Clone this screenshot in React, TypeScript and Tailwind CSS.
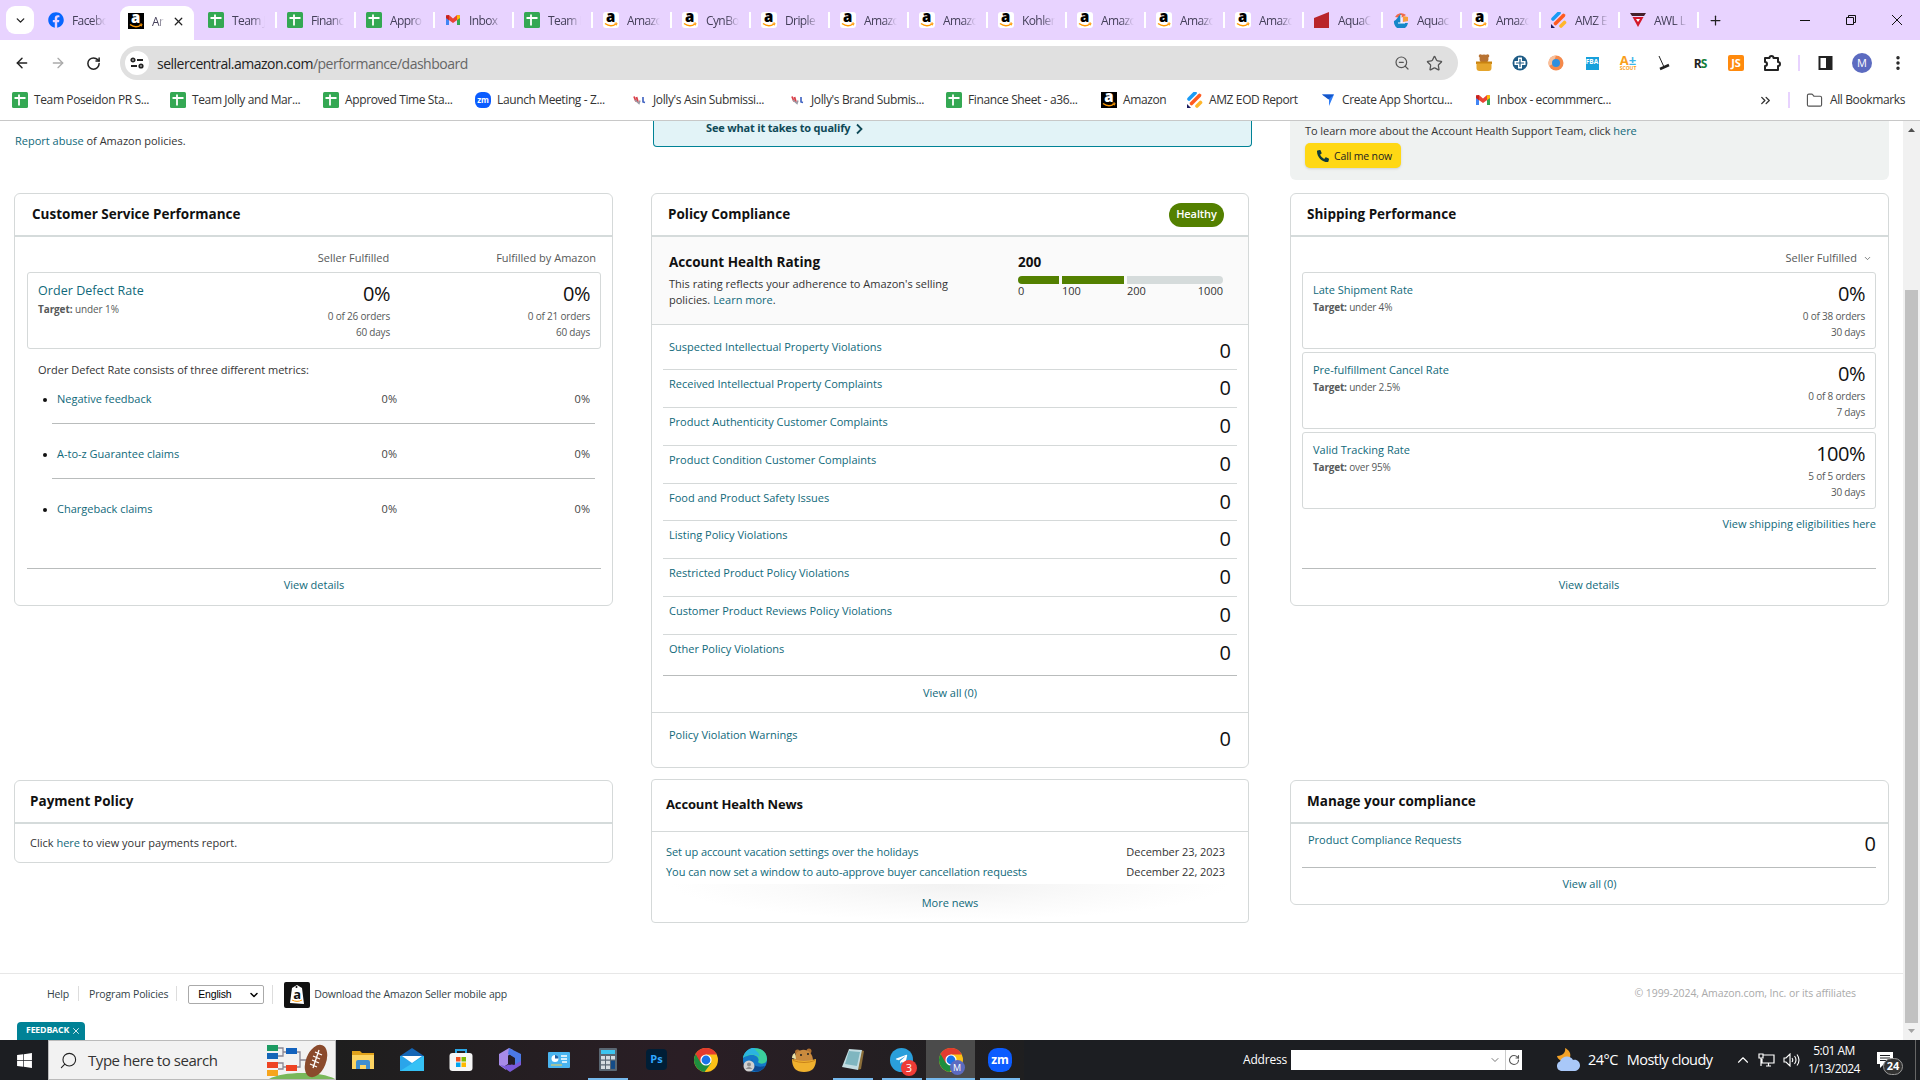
import React from 'react';
import {
  ArrowLeft,
  ArrowRight,
  ChevronDown,
  ChevronRight,
  ChevronUp,
  ChevronsRight,
  Folder,
  MoreVertical,
  Plus,
  RotateCw,
  Search,
  Star,
  X,
  ZoomOut,
} from 'lucide-react';
import { FaFacebook, FaPhoneAlt, FaTelegramPlane, FaWindows } from 'react-icons/fa';

type IconName =
  | 'sheets'
  | 'gmail'
  | 'amazon'
  | 'amazonDark'
  | 'zoom'
  | 'jolly'
  | 'bars'
  | 'plane'
  | 'red'
  | 'swirl'
  | 'triangle';

const SheetsIcon = () => (
  <svg width="16" height="16" viewBox="0 0 16 16">
    <rect width="16" height="16" rx="1.5" fill="#34a853" />
    <path d="M2.5 6h11M7 2.5v11" stroke="#fff" strokeWidth="1.8" />
  </svg>
);

const GmailIcon = () => (
  <svg width="16" height="16" viewBox="0 0 16 16">
    <path d="M1 4v9h3V7z" fill="#4285f4" />
    <path d="M15 4v9h-3V7z" fill="#34a853" />
    <path d="M1 3.5 4 3l4 3.5L12 3l3 .5V6L8 11 1 6z" fill="#ea4335" />
    <path d="M12 3l3 .5V6l-3 2z" fill="#fbbc04" />
    <path d="M1 3.5 4 3v5L1 6z" fill="#c5221f" />
  </svg>
);

const AmazonIcon = ({ dark = false }: { dark?: boolean }) => (
  <svg width="16" height="16" viewBox="0 0 16 16">
    <rect width="16" height="16" rx={dark ? 0 : 3} fill={dark ? '#000' : '#fff'} />
    <text x="7.7" y="10" textAnchor="middle" fontSize="15" fontWeight="800" fontFamily="Open Sans" fill={dark ? '#fff' : '#000'}>
      a
    </text>
    <path d="M2 11.5c3.5 2.6 8 2.6 11 .5" stroke="#ff9900" strokeWidth="1.5" fill="none" />
    <path d="M11.5 11.2l2.500-.2-.6 2.400" stroke="#ff9900" strokeWidth="1" fill="none" />
  </svg>
);

const ZoomIcon = ({ size = 16 }: { size?: number }) => (
  <svg width={size} height={size} viewBox="0 0 24 24">
    <rect width="24" height="24" rx="9.5" fill="#0b5cff" />
    <text x="12" y="16" textAnchor="middle" fontSize="12" fontWeight="700" fontFamily="Open Sans" fill="#fff">
      zm
    </text>
  </svg>
);

const ChromeIcon = () => (
  <svg width="24" height="24" viewBox="0 0 24 24">
    <circle cx="12" cy="12" r="12" fill="#fbc116" />
    <path d="M12 12 1.6 6A12 12 0 0 0 10.5 23.900L17.200 15z" fill="#1e8e3e" />
    <path d="M12 12V6.500h10.700A12 12 0 0 0 1.600 6l5.200 9z" fill="#e33b2e" />
    <circle cx="12" cy="12" r="5.6" fill="#fff" />
    <circle cx="12" cy="12" r="4.4" fill="#1a73e8" />
  </svg>
);

const SiteIcon = ({ name }: { name: IconName }) => {
  switch (name) {
    case 'sheets':
      return <SheetsIcon />;
    case 'gmail':
      return <GmailIcon />;
    case 'amazon':
      return <AmazonIcon />;
    case 'amazonDark':
      return <AmazonIcon dark />;
    case 'zoom':
      return <ZoomIcon />;
    case 'jolly':
      return (
        <svg width="16" height="16" viewBox="0 0 16 16">
          <path d="M3 4.5l2 5M5.500 5l1.500 5" stroke="#d9414a" strokeWidth="1.8" />
          <path d="M4 8l4 3.5 1-3" stroke="#9a9aa5" strokeWidth="1.5" fill="none" />
          <path d="M12 5v5l2 .5" stroke="#3b5fc0" strokeWidth="1.6" fill="none" />
        </svg>
      );
    case 'bars':
      return (
        <svg width="16" height="16" viewBox="0 0 16 16">
          <path d="M2 7l6-6" stroke="#1a9bf5" strokeWidth="3.6" strokeLinecap="round" />
          <path d="M4.500 11.500l8-8" stroke="#ff5a1f" strokeWidth="3.6" strokeLinecap="round" />
          <path d="M10 14l3.500-3.500" stroke="#ffb62a" strokeWidth="3.6" strokeLinecap="round" />
          <path d="M0 12l4 4H0z" fill="#1c1d5e" />
        </svg>
      );
    case 'plane':
      return (
        <svg width="16" height="16" viewBox="0 0 16 16">
          <path d="M2 2.500h12L9 14V7z" fill="#2f7df6" />
          <path d="M2 2.500h12L8.500 7.500z" fill="#1456c9" />
        </svg>
      );
    case 'red':
      return (
        <svg width="16" height="16" viewBox="0 0 16 16">
          <path d="M0 6 15 0v16H0z" fill="#b9252b" />
        </svg>
      );
    case 'swirl':
      return (
        <svg width="16" height="16" viewBox="0 0 16 16">
          <path d="M2 5a7 7 0 0 1 11-2L8 6z" fill="#f06a4b" />
          <path d="M1 9c3-1 4-5 7-7v9h7a7 7 0 0 1-14-2z" fill="#1687c9" />
          <path d="M8 3v8H5M8 11h4" stroke="#fff" strokeWidth="1.2" fill="none" />
          <path d="M10 4l5 1v4l-5 1z" fill="#f7a03c" />
        </svg>
      );
    case 'triangle':
      return (
        <svg width="16" height="16" viewBox="0 0 16 16">
          <path d="M0 1h16l-2 3H2z" fill="#43202a" />
          <path d="M2.500 5h11L8 15z" fill="#d3182a" />
          <path d="M6 7h4L8 10z" fill="#fff" />
        </svg>
      );
  }
};

const tabs: { title: string; icon: IconName }[] = [
  { title: 'Team J', icon: 'sheets' },
  { title: 'Financ', icon: 'sheets' },
  { title: 'Appro', icon: 'sheets' },
  { title: 'Inbox', icon: 'gmail' },
  { title: 'Team I', icon: 'sheets' },
  { title: 'Amazo', icon: 'amazon' },
  { title: 'CynBo', icon: 'amazon' },
  { title: 'Driple', icon: 'amazon' },
  { title: 'Amazo', icon: 'amazon' },
  { title: 'Amazo', icon: 'amazon' },
  { title: 'Kohler', icon: 'amazon' },
  { title: 'Amazo', icon: 'amazon' },
  { title: 'Amazo', icon: 'amazon' },
  { title: 'Amazo', icon: 'amazon' },
  { title: 'AquaC', icon: 'red' },
  { title: 'Aquac', icon: 'swirl' },
  { title: 'Amazo', icon: 'amazon' },
  { title: 'AMZ E', icon: 'bars' },
  { title: 'AWL L', icon: 'triangle' },
];

const bookmarks: { title: string; icon: IconName; width: string }[] = [
  { title: 'Team Poseidon PR S...', icon: 'sheets', width: 'w-[158px]' },
  { title: 'Team Jolly and Mar...', icon: 'sheets', width: 'w-[153px]' },
  { title: 'Approved Time Sta...', icon: 'sheets', width: 'w-[152px]' },
  { title: 'Launch Meeting - Z...', icon: 'zoom', width: 'w-[156px]' },
  { title: "Jolly's Asin Submissi...", icon: 'jolly', width: 'w-[158px]' },
  { title: "Jolly's Brand Submis...", icon: 'jolly', width: 'w-[157px]' },
  { title: 'Finance Sheet - a36...', icon: 'sheets', width: 'w-[155px]' },
  { title: 'Amazon', icon: 'amazonDark', width: 'w-[86px]' },
  { title: 'AMZ EOD Report', icon: 'bars', width: 'w-[133px]' },
  { title: 'Create App Shortcu...', icon: 'plane', width: 'w-[155px]' },
  { title: 'Inbox - ecommmerc...', icon: 'gmail', width: 'w-[160px]' },
];

const TabStrip = () => (
  <div className="flex h-10 items-center bg-[#e8d3ff] text-xs text-[#45405a]">
    <div className="ml-1.5 flex h-7 w-7 items-center justify-center rounded-[9px] bg-white">
      <ChevronDown size={13} strokeWidth={2.5} color="#222" />
    </div>
    <div className="ml-3.5 flex w-[72px] items-center gap-2">
      <FaFacebook size={16} color="#0866ff" className="shrink-0" />
      <span className="w-[34px] overflow-hidden whitespace-nowrap pt-[2px] tracking-[-0.6px] [mask-image:linear-gradient(to_right,#000_60%,transparent)]">Facebo</span>
    </div>
    <div className="flex h-[34px] w-[74px] items-center self-end rounded-t-[9px] bg-white pb-[4px] pl-2">
      <AmazonIcon dark />
      <span className="ml-2 w-3 overflow-hidden pt-[2px] tracking-[-0.6px] [mask-image:linear-gradient(to_right,#000_50%,transparent)]">Am</span>
      <X size={13} strokeWidth={2.4} color="#222" className="ml-[8px]" />
    </div>
    <div className="ml-[14px] flex">
      {tabs.map((tab, i) => (
        <div key={i} className="flex w-[79px] items-center">
          <SiteIcon name={tab.icon} />
          <span className="ml-2 w-[33px] overflow-hidden whitespace-nowrap pt-[2px] tracking-[-0.6px] [mask-image:linear-gradient(to_right,#000_60%,transparent)]">{tab.title}</span>
          <span className="ml-[10px] h-4 w-[2px] bg-white" />
        </div>
      ))}
    </div>
    <Plus size={15} strokeWidth={2} color="#222" className="-ml-[1px]" />
    <div className="ml-auto flex items-center">
      <svg width="112" height="12" viewBox="0 0 112 12" className="mr-[9px]" fill="none" stroke="#111">
        <path d="M1 6.500h10" />
        <path d="M47.500 3.500h7v7h-7zM49.500 3.500v-2h7v7h-2" />
        <path d="M93 1l10 10M103 1l-10 10" />
      </svg>
    </div>
  </div>
);

const Extensions = () => (
  <div className="ml-[8px] flex items-center">
    <div className="flex w-9 justify-center">
      <svg width="18" height="18" viewBox="0 0 18 18">
        <circle cx="9" cy="5" r="4.500" fill="#b87333" />
        <circle cx="5.500" cy="2" r="1.800" fill="#b87333" />
        <circle cx="12.500" cy="2" r="1.800" fill="#b87333" />
        <path d="M1 7.500h16V10H1z" fill="#c98311" />
        <path d="M1.500 9.500h15V14q0 3-3 3h-9q-3 0-3-3z" fill="#e5a52c" />
      </svg>
    </div>
    <div className="flex w-9 justify-center">
      <svg width="16" height="16" viewBox="0 0 16 16">
        <circle cx="8" cy="8" r="7.500" fill="#1f5c86" />
        <path d="M8 2.500v11M2.500 8h11" stroke="#fff" strokeWidth="4" />
        <path d="M8 4v8M4 8h8" stroke="#1f5c86" strokeWidth="1.200" />
      </svg>
    </div>
    <div className="flex w-9 justify-center">
      <svg width="16" height="16" viewBox="0 0 16 16">
        <circle cx="8" cy="8" r="7.500" fill="#f4894b" />
        <path d="M8 .5A7.500 7.500 0 0 0 1 11l4-2z" fill="#f9c09b" />
        <circle cx="8" cy="8" r="4" fill="#2e8fe0" />
      </svg>
    </div>
    <div className="flex w-9 justify-center">
      <div className="flex h-[13px] w-[13px] justify-center bg-[#16a0dc] text-[6.500px] font-bold leading-[10px] text-white">FBA</div>
    </div>
    <div className="flex w-9 flex-col items-center text-[#f9a01b]">
      <span className="text-[13px] font-bold leading-[11px]">
        A<span className="text-[#3db6e8]">±</span>
      </span>
      <span className="text-[5px] font-bold leading-[5px]">SCOUT</span>
    </div>
    <div className="flex w-9 justify-center">
      <svg width="12" height="16" viewBox="0 0 12 16" fill="none" stroke="#222">
        <path d="M1 1l5 11" />
        <path d="M2 14l9-4" strokeWidth="2.500" />
      </svg>
    </div>
    <div className="flex w-9 items-end justify-center text-[12px] font-bold leading-4 tracking-[-1px] text-[#222]">
      R<span className="mt-[2px] text-[#14803c]">S</span>
    </div>
    <div className="flex w-9 justify-center">
      <div className="flex h-4 w-4 items-center justify-center rounded-[2px] bg-[#ff8a0d] text-[11px] font-bold text-white">JS</div>
    </div>
    <div className="flex w-9 justify-center">
      <svg width="18" height="18" viewBox="0 0 18 18" fill="none" stroke="#222" strokeWidth="2">
        <path d="M2 4h4.500a2 2 0 0 1 4 0H15v4a2 2 0 0 1 0 4v4H2v-4a2 2 0 0 0 0-4z" strokeLinejoin="round" />
      </svg>
    </div>
    <span className="ml-2 h-4 w-[2px] bg-[#e8d3ff]" />
    <svg width="16" height="16" viewBox="0 0 16 16" className="ml-[18px]">
      <rect x="1.500" y="2" width="12" height="12" fill="#fff" stroke="#222" strokeWidth="2" />
      <path d="M8 2h6v12H8z" fill="#222" />
    </svg>
    <div className="ml-[18px] flex h-5 w-5 items-center justify-center rounded-full bg-[#5c6bc0] text-[11px] text-white">M</div>
    <MoreVertical size={18} strokeWidth={2.6} color="#222" className="ml-[17px]" />
  </div>
);

const Toolbar = () => (
  <div className="flex h-10 items-center bg-white pt-[6px]">
    <ArrowLeft size={16} strokeWidth={2.2} color="#222" className="ml-[14px]" />
    <ArrowRight size={16} strokeWidth={2} color="#aaa" className="ml-5" />
    <RotateCw size={15} strokeWidth={2.4} color="#222" className="ml-5" />
    <div className="ml-[19px] flex h-[34px] w-[1338px] items-center rounded-full bg-[#e0e0e0] pl-[5px]">
      <div className="flex h-6 w-6 items-center justify-center rounded-full bg-white">
        <svg width="14" height="12" viewBox="0 0 14 12" fill="none" stroke="#222" strokeWidth="1.800">
          <circle cx="3" cy="3" r="1.700" />
          <path d="M7 3h6M1 9h6" />
          <circle cx="11" cy="9" r="1.700" />
        </svg>
      </div>
      <span className="ml-2 text-[14px] tracking-[-0.5px] text-[#222]">
        sellercentral.amazon.com<span className="text-[#666]">/performance/dashboard</span>
      </span>
      <ZoomOut size={16} strokeWidth={1.8} color="#555" className="ml-auto" />
      <Star size={17} strokeWidth={1.8} color="#555" className="ml-4 mr-[15px]" />
    </div>
    <Extensions />
  </div>
);

const BookmarkBar = () => (
  <div className="flex h-[41px] items-center border-b border-[#c8c8c8] bg-white pl-3 text-[12px] tracking-[-0.38px] text-[#333]">
    {bookmarks.map((b, i) => (
      <div key={i} className={`flex shrink-0 items-center gap-1.5 whitespace-nowrap ${b.width}`}>
        <SiteIcon name={b.icon} />
        {b.title}
      </div>
    ))}
    <ChevronsRight size={15} strokeWidth={2.2} color="#333" className="ml-auto" />
    <span className="ml-[15px] h-4 w-[2px] bg-[#e8d3ff]" />
    <Folder size={17} strokeWidth={1.6} color="#555" className="ml-4" />
    <span className="ml-[7px] mr-[15px]">All Bookmarks</span>
  </div>
);

const Link = ({ children, className = '' }: { children: React.ReactNode; className?: string }) => (
  <a className={`text-[#10697a] ${className}`}>{children}</a>
);

const CardTitle = ({ children }: { children: React.ReactNode }) => (
  <h2 className="text-[13.500px] font-bold text-[#111]">{children}</h2>
);

const Rate = ({ value, orders, days }: { value: string; orders: string; days: string }) => (
  <div className="flex flex-col items-end text-[10px] leading-4 tracking-[-0.2px] text-[#565959]">
    <span className="mb-px text-[20px] leading-[26px] tracking-[-0.500px] text-[#111]">{value}</span>
    <span>{orders}</span>
    <span>{days}</span>
  </div>
);

const odrMetrics = ['Negative feedback', 'A-to-z Guarantee claims', 'Chargeback claims'];

const CustomerServiceCard = () => (
  <section className="flex h-[413px] w-[599px] flex-col rounded-[6px] border border-[#d5d9d9]">
    <div className="flex h-[43px] items-center border-b-2 border-[#d5dbdb] pl-[17px]">
      <CardTitle>Customer Service Performance</CardTitle>
    </div>
    <div className="flex h-[35px] items-center justify-end pr-[16px] pt-[7px] text-[#565959]">
      <span className="mr-[107px]">Seller Fulfilled</span>
      <span>Fulfilled by Amazon</span>
    </div>
    <div className="ml-3 mr-[11px] flex h-[77px] rounded-[3px] border border-[#d5d9d9] pl-[10px] pr-[10px] pt-[8px]">
      <div className="flex-1">
        <Link className="block pt-px text-[12.500px] leading-[18px] tracking-[0.050px]">Order Defect Rate</Link>
        <div className="text-[10px] leading-[19px] tracking-[-0.1px] text-[#565959]">
          <b className="font-bold">Target:</b> under 1%
        </div>
      </div>
      <Rate value="0%" orders="0 of 26 orders" days="60 days" />
      <div className="flex w-[200px] justify-end">
        <Rate value="0%" orders="0 of 21 orders" days="60 days" />
      </div>
    </div>
    <p className="mt-[13px] pl-[23px] leading-4 text-[#333]">Order Defect Rate consists of three different metrics:</p>
    <ul className="mt-[9px] pl-[37px] pr-[17px]">
      {odrMetrics.map((metric, i) => (
        <li key={metric} className={i < 2 ? 'mb-[18px] flex h-[37px] items-start border-b border-[#b9bcbc] pt-1' : 'flex h-[37px] items-start pt-1'}>
          <span className="-ml-[9px] mr-[10px] mt-[7px] h-[4px] w-[4px] rounded-full bg-[#111]" />
          <Link className="leading-4">{metric}</Link>
          <span className="ml-auto w-[193px] text-right leading-4 text-[#444]">0%</span>
          <span className="mr-[5px] w-[193px] text-right leading-4 text-[#444]">0%</span>
        </li>
      ))}
    </ul>
    <div className="ml-3 mr-[11px] mt-auto flex h-[37px] items-center justify-center border-t border-[#b9bcbc] pb-[3px]">
      <Link>View details</Link>
    </div>
  </section>
);

const violations = [
  'Suspected Intellectual Property Violations',
  'Received Intellectual Property Complaints',
  'Product Authenticity Customer Complaints',
  'Product Condition Customer Complaints',
  'Food and Product Safety Issues',
  'Listing Policy Violations',
  'Restricted Product Policy Violations',
  'Customer Product Reviews Policy Violations',
  'Other Policy Violations',
];

const CountRow = ({ label, className = '' }: { label: string; className?: string }) => (
  <div className={`flex items-start justify-between pl-[6px] ${className}`}>
    <Link className="leading-4">{label}</Link>
    <span className="text-[20px] leading-6 text-[#111]">0</span>
  </div>
);

const HealthScale = () => (
  <div className="mt-[15px] w-[205px]">
    <CardTitle>200</CardTitle>
    <div className="mt-[4px] flex h-2 gap-[3px]">
      <div className="w-[41px] rounded-l-full bg-[#538000]" />
      <div className="w-[62px] bg-[#538000]" />
      <div className="flex-1 rounded-r-full bg-[#d5dbdb]" />
    </div>
    <div className="flex leading-[14px] text-[#333]">
      <span className="w-11">0</span>
      <span className="w-[65px]">100</span>
      <span>200</span>
      <span className="ml-auto">1000</span>
    </div>
  </div>
);

const PolicyCard = () => (
  <section className="h-[575px] w-[598px] rounded-[6px] border border-[#d5d9d9]">
    <div className="flex h-[43px] items-center justify-between border-b-2 border-[#d5dbdb] pl-4 pr-6">
      <CardTitle>Policy Compliance</CardTitle>
      <span className="flex h-6 w-[55px] items-center justify-center rounded-full bg-[#538000] text-[11px] font-semibold tracking-[-0.1px] text-white">Healthy</span>
    </div>
    <div className="flex h-[88px] justify-between border-b border-[#d5d9d9] bg-[#fafafa] pl-[17px] pr-[25px]">
      <div className="mt-[15px] w-[300px]">
        <CardTitle>Account Health Rating</CardTitle>
        <p className="mt-[4px] leading-4 text-[#333]">
          This rating reflects your adherence to Amazon's selling
          <br />
          policies. <Link>Learn more</Link>.
        </p>
      </div>
      <HealthScale />
    </div>
    <div className="px-[11px] pt-[7.700px]">
      {violations.map((v, i) => (
        <CountRow
          key={v}
          label={v}
          className={i === 8 ? 'h-[41.300px] border-b border-[#b9bcbc] pr-[6px] pt-[6px]' : 'h-[37.750px] border-b border-[#d5d9d9] pr-[6px] pt-[6px]'}
        />
      ))}
    </div>
    <div className="flex h-[37px] items-center justify-center border-b border-[#d5d9d9] pb-[2px]">
      <Link>View all (0)</Link>
    </div>
    <CountRow label="Policy Violation Warnings" className="mx-[11px] pr-[6px] pt-[14px]" />
  </section>
);

const shippingRates = [
  { name: 'Late Shipment Rate', target: 'under 4%', value: '0%', orders: '0 of 38 orders', days: '30 days' },
  { name: 'Pre-fulfillment Cancel Rate', target: 'under 2.5%', value: '0%', orders: '0 of 8 orders', days: '7 days' },
  { name: 'Valid Tracking Rate', target: 'over 95%', value: '100%', orders: '5 of 5 orders', days: '30 days' },
];

const ShippingCard = () => (
  <section className="flex h-[413px] w-[599px] flex-col rounded-[6px] border border-[#d5d9d9]">
    <div className="flex h-[43px] shrink-0 items-center border-b-2 border-[#d5dbdb] pl-4">
      <CardTitle>Shipping Performance</CardTitle>
    </div>
    <div className="flex h-[35px] shrink-0 items-center justify-end gap-1.5 pr-[16px] pt-[7px] text-[#565959]">
      Seller Fulfilled
      <ChevronDown size={9} />
    </div>
    <div className="ml-[11px] mr-3 flex flex-col gap-[3px]">
      {shippingRates.map((rate) => (
        <div key={rate.name} className="flex h-[77px] justify-between rounded-[3px] border border-[#d5d9d9] pl-[10px] pr-[10px] pt-[8px]">
          <div>
            <Link className="block leading-[18px]">{rate.name}</Link>
            <div className="text-[10px] leading-4 tracking-[-0.2px] text-[#565959]">
              <b className="font-bold">Target:</b> {rate.target}
            </div>
          </div>
          <Rate value={rate.value} orders={rate.orders} days={rate.days} />
        </div>
      ))}
    </div>
    <Link className="mr-3 mt-[7px] self-end leading-4">View shipping eligibilities here</Link>
    <div className="ml-[11px] mr-3 mt-auto flex h-[37px] items-center justify-center border-t border-[#b9bcbc] pb-[3px]">
      <Link>View details</Link>
    </div>
  </section>
);

const news = [
  { title: 'Set up account vacation settings over the holidays', date: 'December 23, 2023' },
  { title: 'You can now set a window to auto-approve buyer cancellation requests', date: 'December 22, 2023' },
];

const LowerRow = () => (
  <div className="flex items-start pl-[14px]">
    <section className="mt-[1px] h-[83px] w-[599px] rounded-[6px] border border-[#d5d9d9]">
      <div className="flex h-[43px] items-center border-b-2 border-[#d5dbdb] pl-[15px]">
        <CardTitle>Payment Policy</CardTitle>
      </div>
      <p className="pl-[15px] leading-[38px] text-[#333]">
        Click <Link>here</Link> to view your payments report.
      </p>
    </section>
    <section className="ml-[38px] h-[144px] w-[598px] rounded-[4px] border border-[#d5d9d9]">
      <div className="flex h-[52px] items-center border-b border-[#d5d9d9] pb-px pl-[14px]">
        <h2 className="text-[13px] font-bold tracking-[-0.130px] text-[#111]">Account Health News</h2>
      </div>
      <div className="pl-[14px] pr-[23px] pt-[10px]">
        {news.map((n) => (
          <div key={n.title} className="flex justify-between leading-5 tracking-[-0.060px]">
            <Link>{n.title}</Link>
            <span className="tracking-[-0.050px] text-[#333]">{n.date}</span>
          </div>
        ))}
      </div>
      <div className="mx-4 mt-[2px] flex h-[37px] items-center justify-center bg-[radial-gradient(ellipse_at_top,#f2f2f2_0%,#fafafa_40%,#ffffff_70%)] pt-[2px]">
        <Link>More news</Link>
      </div>
    </section>
    <section className="ml-[41px] mt-[1px] h-[125px] w-[599px] rounded-[6px] border border-[#d5d9d9]">
      <div className="flex h-[43px] items-center border-b-2 border-[#d5dbdb] pl-4">
        <CardTitle>Manage your compliance</CardTitle>
      </div>
      <CountRow label="Product Compliance Requests" className="ml-[11px] mr-3 h-[44px] border-b border-[#b9bcbc] pt-[8px]" />
      <div className="flex h-[33px] items-center justify-center">
        <Link>View all (0)</Link>
      </div>
    </section>
  </div>
);

const Footer = () => (
  <footer className="flex h-[49px] items-start border-t border-[#e7e7e7] text-[10.500px] tracking-[-0.160px] text-[#333f48]">
    <span className="ml-[47px] mt-[11px] leading-[18px]">Help</span>
    <span className="ml-[9px] mt-3 h-[15px] w-px bg-[#ddd]" />
    <span className="ml-[10px] mt-[11px] leading-[18px]">Program Policies</span>
    <span className="ml-2 mt-3 h-[15px] w-px bg-[#ddd]" />
    <div className="ml-[11px] mt-[11px] flex h-[19px] w-[76px] items-center justify-between rounded-[2px] border border-[#aaa] pl-[9px] pr-[3px] font-['Liberation_Sans',sans-serif] text-[10.500px] text-black">
      English
      <ChevronDown size={12} strokeWidth={3} />
    </div>
    <span className="ml-2 mt-[11px] h-[19px] w-px bg-[#ddd]" />
    <svg width="26" height="26" viewBox="0 0 26 26" className="ml-[11px] mt-2">
      <rect width="26" height="26" rx="2" fill="#111" />
      <path d="M8 6l5-3 5 3 2 16-14-1z" fill="#fff" />
      <circle cx="12.500" cy="5" r="1" fill="#111" />
      <text x="13" y="16.500" textAnchor="middle" fontSize="13" fontWeight="700" fontFamily="Open Sans" fill="#111">
        a
      </text>
      <path d="M8 18c3 1.800 7 1.800 10 0" stroke="#ff9900" fill="none" />
    </svg>
    <span className="ml-1 mt-[11px] leading-[18px]">Download the Amazon Seller mobile app</span>
    <span className="ml-auto mr-[47px] mt-[10px] leading-[18px] tracking-[-0.1px] text-[#aaa]">© 1999-2024, Amazon.com, Inc. or its affiliates</span>
  </footer>
);

const Scrollbar = () => (
  <div className="flex w-[17px] flex-col items-center bg-[#f1f1f1]">
    <svg width="17" height="17" viewBox="0 0 17 17">
      <path d="M5 11l3.500-4 3.500 4z" fill="#505050" />
    </svg>
    <div className="mt-[152px] h-[733px] w-[13px] bg-[#c1c1c1]" />
    <svg width="17" height="17" viewBox="0 0 17 17">
      <path d="M5 6l3.500 4L12 6z" fill="#a3a3a3" />
    </svg>
  </div>
);

const Page = () => (
  <div className="flex h-[919px] bg-white">
    <main className="flex w-[1903px] flex-col text-[11px]">
      <div className="flex h-[72px] items-start pl-[15px]">
        <p className="mt-[12px] w-[638px] leading-4 text-[#333]">
          <Link>Report abuse</Link> of Amazon policies.
        </p>
        <div className="flex h-[26px] w-[599px] items-start gap-1 rounded-b-[4px] border border-t-0 border-[#008296] bg-[#e2f3f7] pl-[52px]">
          <span className="text-[11px] font-bold leading-[14px] tracking-[-0.180px] text-[#0f4a58]">See what it takes to qualify</span>
          <svg width="7" height="12" viewBox="0 0 7 12" className="ml-[2px] mt-[2px]" fill="none" stroke="#0f4a58" strokeWidth="1.800">
            <path d="M1 1.500l4.500 4.500L1 10.500" />
          </svg>
        </div>
        <div className="ml-[38px] h-[59px] w-[599px] rounded-b-[6px] bg-[#eff2f1] pl-[15px] pt-[2px]">
          <p className="leading-4 tracking-[-0.060px] text-[#333]">
            To learn more about the Account Health Support Team, click <Link>here</Link>
          </p>
          <button className="mt-1 flex h-[25px] w-[96px] items-center gap-[5px] rounded-[5px] bg-[#ffd814] pl-3 text-[10.500px] tracking-[-0.150px] text-[#222] shadow-sm">
            <FaPhoneAlt size={12} color="#0f3b3b" className="-scale-x-100 rotate-90" />
            <span className="pt-[2px]">Call me now</span>
          </button>
        </div>
      </div>
      <div className="flex h-[586px] items-start pl-[14px]">
        <CustomerServiceCard />
        <div className="w-[38px]" />
        <PolicyCard />
        <div className="w-[41px]" />
        <ShippingCard />
      </div>
      <LowerRow />
      <div className="mt-auto">
        <Footer />
        <div className="ml-[17px] flex h-[18px] w-[68px] items-center gap-[2px] rounded-t-[4px] bg-[#008296] pl-[9px] text-[8.800px] font-bold tracking-[-0.200px] text-white">
          FEEDBACK
          <X size={10} strokeWidth={2} />
        </div>
      </div>
    </main>
    <Scrollbar />
  </div>
);

const TaskIcon = ({ children, open = false, active = false }: { children: React.ReactNode; open?: boolean; active?: boolean }) => (
  <div className={active ? 'flex h-10 w-[49px] flex-col items-center bg-[#4b4b4b]' : 'flex h-10 w-[49px] flex-col items-center'}>
    <div className="relative flex h-[38px] items-center pt-[1px]">{children}</div>
    {(open || active) && <div className={active ? 'h-[2px] w-full bg-[#76b9ed]' : 'h-[2px] w-10 bg-[#76b9ed]'} />}
  </div>
);

const SearchArt = () => (
  <svg width="68" height="37" viewBox="0 0 68 37">
    <path d="M11 6h5v8h-5M11 27h5v-6h-5M16 10h3M16 25h3M30 10h3v15h-3M33 18h6" stroke="#8b8794" strokeWidth="1.300" fill="none" />
    <rect x="0" y="3" width="11" height="6" fill="#1c9b62" />
    <rect x="0" y="11" width="11" height="6" fill="#1566b8" />
    <rect x="0" y="20" width="11" height="6" fill="#ee4323" />
    <rect x="0" y="28" width="11" height="6" fill="#f7a51c" />
    <rect x="19" y="6" width="11" height="6" fill="#1262bd" />
    <rect x="19" y="23" width="11" height="6" fill="#ee4323" />
    <path d="M2 37c14-8 52-8 66 0z" fill="#79b85a" />
    <ellipse cx="49" cy="19" rx="10" ry="17" transform="rotate(22 49 19)" fill="#8a4a2c" />
    <path d="M52 8l-6 18M48 10l7 3M46 14l7 3M45 18l7 3M43 22l7 3" stroke="#fff" strokeWidth="1.300" />
  </svg>
);

const Taskbar = () => (
  <div className="flex h-10 items-center bg-[#1c1e22] text-white">
    <div className="flex w-12 justify-center">
      <FaWindows size={17} />
    </div>
    <div className="flex h-10 w-[288px] items-center border border-[#bbb] bg-[#f2f2f2] pl-[10px]">
      <Search size={19} strokeWidth={1.4} color="#222" className="-scale-x-100" />
      <span className="ml-[10px] text-[15px] tracking-[-0.450px] text-[#333]">Type here to search</span>
      <div className="ml-auto">
        <SearchArt />
      </div>
    </div>
    <div className="ml-[2px] flex bg-linear-to-r from-[#1e1e1e] via-[#2a1e25] to-[#1f1f20]">
      <TaskIcon>
        <svg width="22" height="18" viewBox="0 0 22 18">
          <path d="M0 0h8l2 2h12v16H0z" fill="#e0a21b" />
          <path d="M0 4h22v14H0z" fill="#fcd462" />
          <path d="M4 18v-7q0-2 2-2h10q2 0 2 2v7h-4v-4H8v4z" fill="#3e8ed0" />
        </svg>
      </TaskIcon>
      <TaskIcon>
        <svg width="24" height="23" viewBox="0 0 24 23">
          <path d="M0 8 12 0l12 8v2H0z" fill="#1465b5" />
          <path d="M0 8h24v15H0z" fill="#2aa5ea" />
          <path d="M2 8h20l-10 7z" fill="#fff" />
          <path d="M0 23 24 8v15z" fill="#35c1f5" />
        </svg>
      </TaskIcon>
      <TaskIcon>
        <svg width="24" height="24" viewBox="0 0 24 24">
          <path d="M7 6V2h10v4" stroke="#2ba6e6" strokeWidth="2" fill="none" />
          <rect y="5" x="0.500" width="23" height="18" rx="3" fill="#f6f6f6" />
          <path d="M7 9h4.500v4.500H7z" fill="#f25022" />
          <path d="M12.500 9H17v4.500h-4.500z" fill="#7fba00" />
          <path d="M7 14.500h4.500V19H7z" fill="#00a4ef" />
          <path d="M12.500 14.500H17V19h-4.500z" fill="#ffb900" />
        </svg>
      </TaskIcon>
      <TaskIcon>
        <svg width="22" height="24" viewBox="0 0 22 24">
          <path d="M10 0l4 2-5 6v8l-3 2 1 4-7-5V6z" fill="#a78be8" />
          <path d="M10 0l12 6v9l-6 4V10l-7-4z" fill="#4b79e4" />
          <path d="M1 17l5 1 5-2 4 1 7-4v4l-11 7z" fill="#7a5ad8" />
          <path d="M9 8l2-1 4 3v5l-4 2-2-1z" fill="#231d24" />
        </svg>
      </TaskIcon>
      <TaskIcon>
        <svg width="22" height="16" viewBox="0 0 22 16">
          <rect width="22" height="16" rx="1" fill="#4ab4ef" />
          <circle cx="7" cy="6.500" r="3.500" fill="#fff" />
          <path d="M7 6.500V3a3.500 3.500 0 0 1 3.500 3.500z" fill="#1e5fa8" />
          <path d="M13 4h6M13 7h6M14 10h5" stroke="#fff" strokeWidth="1.400" />
          <path d="M3 13h11" stroke="#f8d04a" />
        </svg>
      </TaskIcon>
      <TaskIcon open>
        <svg width="18" height="23" viewBox="0 0 18 23">
          <rect width="18" height="23" rx="1" fill="#5a6773" />
          <path d="M2 2h14v4H2z" fill="#3cc4ef" />
          <path d="M2 8h4v3.500H2zM7 8h4v3.500H7zM12 8h4v3.500h-4zM2 12.700h4v3.500H2zM7 12.700h4v3.500H7zM2 17.400h4v3.500H2zM7 17.400h4v3.500H7z" fill="#d6dce1" />
          <path d="M12 12.700h4v8.200h-4z" fill="#134b87" />
        </svg>
      </TaskIcon>
      <TaskIcon>
        <div className="flex h-[21px] w-[21px] items-center justify-center rounded-[4px] bg-[#001e36] text-[11px] font-bold text-[#31a8ff]">Ps</div>
      </TaskIcon>
      <TaskIcon>
        <ChromeIcon />
      </TaskIcon>
      <TaskIcon>
        <svg width="24" height="24" viewBox="0 0 24 24">
          <circle cx="12" cy="12" r="12" fill="#1478c8" />
          <path d="M0 10C2-3 24-3 24 11c0 5-7 6-9 3 2-3-1-7-6-7-4 0-8 2-9 3z" fill="#3bcf9c" />
          <path d="M0 10C2 2 8-1 12 0c-2 2 6 4 4 9-2-3-12-4-16 1z" fill="#2bb4e0" />
          <path d="M9 11c0 7 6 9 13 7-4 7-14 8-14-1z" fill="#0c4a94" />
          <circle cx="6" cy="18" r="5.500" fill="#d0d0d0" />
          <circle cx="6" cy="16.500" r="2" fill="#8c8c8c" />
          <path d="M2.500 21q3.500-4 7 0z" fill="#8c8c8c" />
        </svg>
      </TaskIcon>
      <TaskIcon>
        <svg width="24" height="24" viewBox="0 0 24 24">
          <circle cx="5.500" cy="4" r="2.500" fill="#b2722f" />
          <circle cx="17" cy="3" r="2.500" fill="#b2722f" />
          <path d="M2 13C2-2 21-2 21 13z" fill="#c98a3e" />
          <path d="M0 10q0-4 3-5l1 6z" fill="#e9e2a8" />
          <circle cx="9" cy="7" r="1" fill="#222" />
          <circle cx="16" cy="6" r="1" fill="#222" />
          <path d="M0 11q12 4 24 0c0 9-4 13-12 13S0 20 0 11z" fill="#f0b12e" />
          <path d="M1 12.500q11 4 22 0" stroke="#c9831a" fill="none" />
        </svg>
      </TaskIcon>
      <TaskIcon open>
        <svg width="24" height="22" viewBox="0 0 24 22">
          <path d="M20 1l3 1-3 18-4 1z" fill="#8c6f3a" />
          <path d="M8 0l13 1-4 20-16-3z" fill="#c4dde2" />
          <path d="M8 2l11 1-3 14-12-2z" fill="#7fb6c0" />
        </svg>
      </TaskIcon>
      <TaskIcon open>
        <div className="flex h-[24px] w-[23px] items-center justify-center rounded-full bg-[#2a9fdb]">
          <FaTelegramPlane size={13} />
        </div>
        <span className="absolute -right-[4px] bottom-[2px] flex h-4 w-4 items-center justify-center rounded-full bg-[#ee3b36] text-[11px]">3</span>
      </TaskIcon>
      <TaskIcon active>
        <ChromeIcon />
        <span className="absolute -right-[2px] bottom-[3px] flex h-[15px] w-[15px] items-center justify-center rounded-full bg-[#5c6bc0] text-[9px]">M</span>
      </TaskIcon>
      <TaskIcon open>
        <ZoomIcon size={24} />
      </TaskIcon>
    </div>
    <span className="ml-[219px] w-[48px] text-[12px] tracking-[-0.2px]">Address</span>
    <div className="flex h-5 w-[231px] items-center justify-end bg-white text-[#555]">
      <ChevronDown size={12} strokeWidth={1.6} />
      <span className="ml-1 h-5 w-px bg-[#ccc]" />
      <RotateCw size={12} strokeWidth={2.2} className="mx-[2px]" />
    </div>
    <div className="ml-[34px] flex w-[186px] items-center">
      <svg width="24" height="24" viewBox="0 0 24 24">
        <path d="M9 0c1 4-2 8-8 8 1 4 5 6 9 5 5-1 7-9-1-13z" fill="#f2a228" />
        <path d="M5 23a5 5 0 0 1-1-9.500C6 7 15 7 17 12c4-1 7 2 7 5.500S21 23 18 23z" fill="#a9c8f8" />
      </svg>
      <span className="ml-2 text-[14.500px] tracking-[-0.550px]">24°C</span>
      <span className="ml-[9px] whitespace-nowrap text-[14.500px] tracking-[-0.550px]">Mostly cloudy</span>
    </div>
    <div className="flex flex-1 items-center">
      <ChevronUp size={18} strokeWidth={1.5} className="-ml-2" />
      <svg width="17" height="14" viewBox="0 0 17 14" className="ml-[6px]" fill="none" stroke="#fff" strokeWidth="1.200">
        <path d="M5 2h11v8H4V6M8 13h5M10.500 10v3M1 1h4v4H1zM3 5v8" />
      </svg>
      <svg width="17" height="14" viewBox="0 0 17 14" className="ml-2" fill="none" stroke="#fff" strokeWidth="1.100">
        <path d="M1 5h2l4-4v12L3 9H1zM9 5q1.500 2 0 4M11.500 3q3 4 0 8M14 1.500q4 5.500 0 11" />
      </svg>
      <div className="ml-[8px] w-[52px] whitespace-nowrap text-center text-[12px] leading-[18px] tracking-[-0.550px]">
        5:01 AM
        <br />
        1/13/2024
      </div>
      <div className="relative ml-[17px]">
        <svg width="16" height="16" viewBox="0 0 16 16">
          <path d="M0 0h16v12H7l-4 4v-4H0z" fill="#fff" />
          <path d="M3 3.500h10M3 6h10M3 8.500h7" stroke="#1c1e22" />
        </svg>
        <span className="absolute left-[6px] top-[6px] flex h-[17px] w-[20px] items-center justify-center rounded-full border border-[#999] bg-[#333] text-[11px] font-bold">24</span>
      </div>
      <span className="ml-auto mr-1 h-10 w-px bg-[#666]" />
    </div>
  </div>
);

const App: React.FC = () => {
  return (
    <div className="h-[1080px] w-[1920px] overflow-hidden bg-white font-['Open_Sans','Noto_Sans',sans-serif]">
      <TabStrip />
      <Toolbar />
      <BookmarkBar />
      <Page />
      <Taskbar />
    </div>
  );
};

export default App;
